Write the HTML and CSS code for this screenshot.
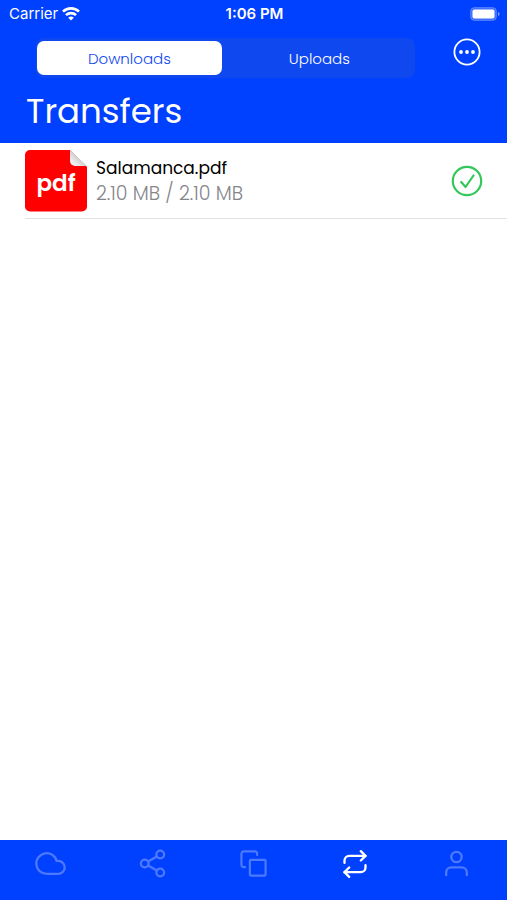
FILE: index.html
```html
<!DOCTYPE html>
<html lang="en">
<head>
    <meta charset="UTF-8">
    <meta name="viewport" content="width=device-width, initial-scale=1.0">
    <title>Transfers</title>
    <link rel="stylesheet" href="styles.css">
</head>
<body>
    <header class="header">
        <div class="status-bar">
            <div class="carrier">
                <span>Carrier</span>
                <svg width="18" height="14" viewBox="0 0 18 14" fill="none" stroke="#fff" stroke-width="2.7" aria-hidden="true">
                    <path d="M1 4.6a11.5 11.5 0 0 1 16 0"/>
                    <path d="M4 8.1a7.2 7.2 0 0 1 10 0"/>
                    <path d="M9 13.6 6.2 10.800a4 4 0 0 1 5.6 0z" fill="#fff" stroke="none"/>
                </svg>
            </div>
            <span class="time">1:06 PM</span>
            <svg class="battery" width="30" height="14" viewBox="0 0 30 14" aria-hidden="true">
                <rect x="0.5" y="0.5" width="26" height="13" rx="4" fill="#fff" fill-opacity="0.25" stroke="#fff" stroke-opacity="0.2"/>
                <rect x="2.5" y="2.5" width="22" height="9" rx="2" fill="#fff"/>
                <path d="M28 5v4q1.6-.6 1.6-2T28 5z" fill="#fff" fill-opacity="0.5"/>
            </svg>
        </div>
        <div class="toolbar">
            <div class="segments">
                <button type="button" class="segment selected">Downloads</button>
                <button type="button" class="segment">Uploads</button>
            </div>
            <button type="button" class="more" aria-label="More">
                <svg width="28" height="28" viewBox="0 0 28 28" fill="#fff">
                    <circle cx="14" cy="14" r="12.6" fill="none" stroke="#fff" stroke-width="1.8"/>
                    <circle cx="8" cy="14" r="1.9"/>
                    <circle cx="14" cy="14" r="1.9"/>
                    <circle cx="20" cy="14" r="1.9"/>
                </svg>
            </button>
        </div>
        <h1>Transfers</h1>
    </header>

    <main>
        <ul class="transfers">
            <li class="transfer">
                <svg class="file-icon" width="62" height="62" viewBox="0 0 62 62" aria-hidden="true">
                    <defs>
                        <linearGradient id="fold" x1="0" y1="1" x2="1" y2="0">
                            <stop offset="0.2" stop-color="#f0f0f0"/>
                            <stop offset="0.5" stop-color="#cfcfcf"/>
                        </linearGradient>
                    </defs>
                    <path d="M5 0h40l17 17v39.5a5 5 0 0 1-5 5H5a5 5 0 0 1-5-5V5a5 5 0 0 1 5-5z" fill="#f00"/>
                    <path d="M45 0l17 16H50a5 5 0 0 1-5-5z" fill="url(#fold)"/>
                    <text x="31" y="41" text-anchor="middle">pdf</text>
                </svg>
                <div class="details">
                    <span class="name">Salamanca.pdf</span>
                    <span class="size">2.10 MB / 2.10 MB</span>
                </div>
                <svg width="32" height="32" viewBox="0 0 32 32" fill="none" stroke="#34c759" stroke-width="2.2" stroke-linecap="round" stroke-linejoin="round" role="img" aria-label="Completed">
                    <circle cx="16" cy="16" r="14.2"/>
                    <path d="M10.2 17l4.4 5L22.5 10.5"/>
                </svg>
            </li>
        </ul>
    </main>

    <nav class="tab-bar">
        <a href="#files" aria-label="Files">
            <svg width="31" height="31" viewBox="0 0 24 24"><path d="M18 10h-1.26A8 8 0 1 0 9 20h9a5 5 0 0 0 0-10z"/></svg>
        </a>
        <a href="#shared" aria-label="Shared">
            <svg width="31" height="31" viewBox="0 0 24 24">
                <circle cx="18" cy="5" r="3"/>
                <circle cx="6" cy="12" r="3"/>
                <circle cx="18" cy="19" r="3"/>
                <path d="M8.6 13.5l6.8 4M15.4 6.5l-6.8 4"/>
            </svg>
        </a>
        <a href="#copies" aria-label="Copies">
            <svg width="29" height="29" viewBox="0 0 24 24">
                <rect x="9" y="9" width="13" height="13" rx="1"/>
                <path d="M5 15H4a2 2 0 0 1-2-2V4a2 2 0 0 1 2-2h9a2 2 0 0 1 2 2v1"/>
            </svg>
        </a>
        <a href="#transfers" class="active" aria-label="Transfers">
            <svg width="28" height="28" viewBox="0 0 24 24">
                <path d="M17 1l4 4-4 4"/>
                <path d="M3 11V9a4 4 0 0 1 4-4h14"/>
                <path d="M7 23l-4-4 4-4"/>
                <path d="M21 13v2a4 4 0 0 1-4 4H3"/>
            </svg>
        </a>
        <a href="#account" aria-label="Account">
            <svg width="31" height="31" viewBox="0 0 24 24">
                <path d="M20 21v-2a4 4 0 0 0-4-4H8a4 4 0 0 0-4 4v2"/>
                <circle cx="12" cy="7" r="4"/>
            </svg>
        </a>
    </nav>
</body>
</html>
```

FILE: styles.css
```css
* {
    box-sizing: border-box;
}

body {
    display: flex;
    flex-direction: column;
    min-height: 100vh;
    margin: 0;
    background-color: #fff;
    font-family: Poppins, Inter, sans-serif;
}

button {
    padding: 0;
    border: none;
    background: none;
    font-family: inherit;
    cursor: pointer;
}

svg {
    display: block;
    flex-shrink: 0;
}

.header {
    padding-bottom: 9px;
    background-color: #0040ff;
    color: #fff;
}

.status-bar {
    display: grid;
    grid-template-columns: 1fr auto 1fr;
    align-items: center;
    height: 27px;
    padding: 0 7px 0 9px;
    font-family: Inter, sans-serif;
    font-size: 15px;
}

.carrier {
    display: flex;
    align-items: center;
    gap: 4px;
}

.time {
    font-weight: 600;
}

.battery {
    justify-self: end;
}

.toolbar {
    display: flex;
    align-items: flex-start;
    justify-content: space-between;
    gap: 38px;
    padding: 11px 26px 0 36px;
}

.segments {
    display: flex;
    flex: 1;
    gap: 3px;
    height: 40px;
    padding: 3px 1px;
    border-radius: 8px;
    background-color: #1048ef;
}

.segment {
    flex: 1;
    border-radius: 7px;
    color: #fff;
    font-size: 15px;
    font-weight: 300;
}

.segment.selected {
    flex: 0 0 49%;
    background-color: #fff;
    color: #1048ef;
}

h1 {
    margin: 11px 26px 0;
    font-size: 34px;
    font-weight: 400;
    line-height: 45px;
}

main {
    flex: 1;
}

.transfers {
    margin: 0;
    padding: 0 0 0 25px;
    list-style: none;
}

.transfer {
    display: flex;
    align-items: center;
    gap: 9px;
    height: 76px;
    padding-right: 24px;
    border-bottom: 1px solid #e2e2e2;
}

.file-icon text {
    fill: #fff;
    font-size: 23px;
    font-weight: 600;
}

.details {
    display: flex;
    flex: 1;
    flex-direction: column;
    line-height: 25px;
}

.name {
    color: #000;
    font-size: 17px;
}

.size {
    color: #85858a;
    font-size: 19px;
    font-weight: 300;
}

.tab-bar {
    display: flex;
    height: 60px;
    padding-top: 8px;
    background-color: #0040ff;
}

.tab-bar a {
    display: flex;
    flex: 1;
    align-items: center;
    justify-content: center;
    height: 31px;
}

.tab-bar svg {
    fill: none;
    stroke: #4d79ff;
    stroke-width: 1.8;
    stroke-linecap: round;
    stroke-linejoin: round;
}

.tab-bar .active svg {
    stroke: #fff;
    stroke-width: 2;
}
```
